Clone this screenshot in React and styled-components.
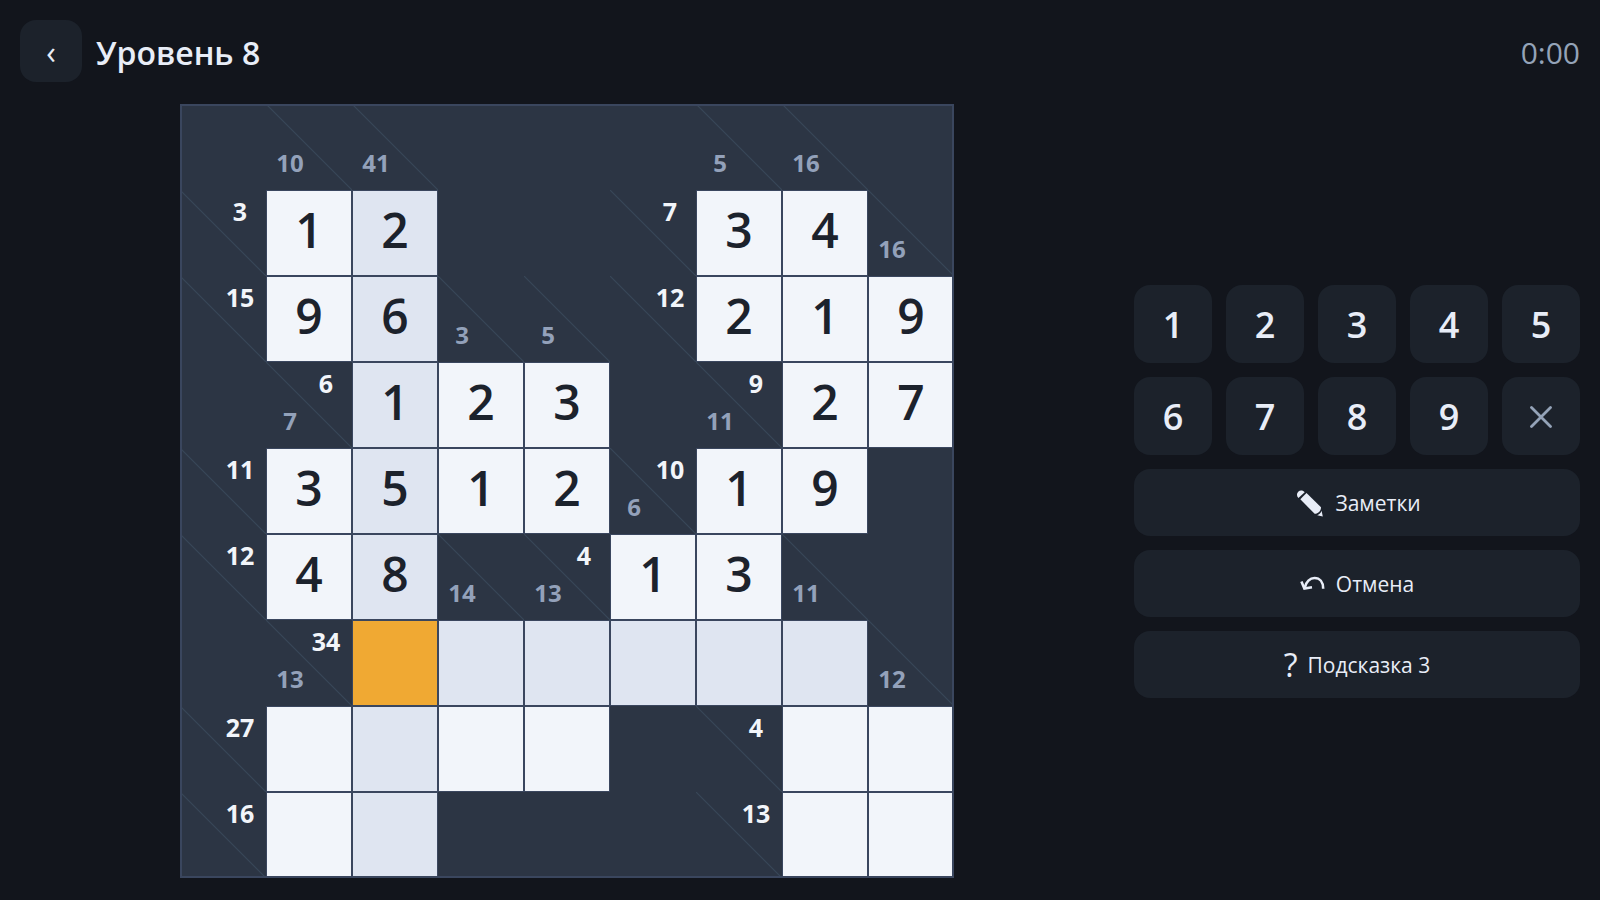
import React from "react";
import styled, { createGlobalStyle, css } from "styled-components";

const color = {
  page: "#12151c",
  surface: "#1c222b",
  text: "#e8edf7",
  muted: "#94a3b8",
  board: "#2c3544",
  line: "#3a465e",
  slash: "#374657",
  cell: "#f2f5fa",
  cellLit: "#dfe5f1",
  cellActive: "#f0a933",
  digit: "#1c222c",
};

const GlobalStyle = createGlobalStyle`
  *, *::before, *::after { box-sizing: border-box; }
  body {
    margin: 0;
    background: ${color.page};
    color: ${color.text};
    font-family: "Segoe UI", "Open Sans", "Noto Sans", sans-serif;
  }
  button { font-family: inherit; color: inherit; border: 0; padding: 0; cursor: pointer; }
`;

const Page = styled.div`
  --cell: round(down, min((100vh - 122px) / 9, (100vw - 506px) / 9), 1px);
  display: flex;
  flex-direction: column;
  gap: 20px;
  min-height: 100vh;
  padding: 20px;
`;

const Header = styled.header`
  display: flex;
  align-items: center;
  gap: 14px;
`;

const BackButton = styled.button`
  && {
    padding-top: 2px;
  }
  width: 62px;
  height: 62px;
  border-radius: 16px;
  background: ${color.surface};
  font-size: 32px;
  line-height: 60px;
`;

const Title = styled.h1`
  flex: 1;
  margin: 0;
  padding-top: 4px;
  font-size: 32px;
  font-weight: 600;
  line-height: 48px;
`;

const Timer = styled.time`
  padding-top: 4px;
  color: ${color.muted};
  font-size: 30px;
  line-height: 48px;
`;

const Main = styled.main`
  flex: 1;
  display: flex;
  align-items: center;
  gap: 20px;
`;

const BoardArea = styled.section`
  flex: 1;
  display: flex;
  justify-content: center;
`;

const Board = styled.div`
  position: relative;
  display: grid;
  grid-template-columns: repeat(9, var(--cell));
  grid-auto-rows: var(--cell);
  background: ${color.board};

  &::after {
    content: "";
    position: absolute;
    inset: 0;
    border: 2px solid ${color.line};
    pointer-events: none;
  }
`;

const cellTone = {
  plain: color.cell,
  lit: color.cellLit,
  active: color.cellActive,
};

const Cell = styled.button`
  && {
    padding-bottom: 6px;
    border: 1px solid ${color.line};
    color: ${color.digit};
  }
  background: ${(p) => cellTone[p.$tone]};
  font-size: 48px;
  font-weight: 600;
  line-height: 1;
`;

const Blank = styled.div``;

const ClueCell = styled.div`
  display: grid;
  grid-template: 1fr 1fr / 1fr 1fr;
  place-items: center;
  padding: 2px 8px 8px 6px;
  background: linear-gradient(
    to top right,
    transparent calc(50% - 1px),
    ${color.slash} 50%,
    transparent calc(50% + 1px)
  );
`;

const clueText = css`
  font-weight: 700;
  line-height: 36px;
`;

const Across = styled.span`
  ${clueText}
  grid-area: 1 / 2;
  color: ${color.cell};
  font-size: 25px;
`;

const Down = styled.span`
  ${clueText}
  grid-area: 2 / 1;
  color: #93a1ba;
  font-size: 24px;
`;

const Controls = styled.aside`
  display: flex;
  flex-direction: column;
  gap: 14px;
  width: 446px;
`;

const Keypad = styled.div`
  display: grid;
  grid-template-columns: repeat(5, 1fr);
  gap: 14px;
`;

const Key = styled.button`
  && {
    padding-top: 2px;
  }
  display: flex;
  align-items: center;
  justify-content: center;
  height: 78px;
  border-radius: 16px;
  background: ${color.surface};
  font-size: 36px;
  font-weight: 600;
  line-height: 1;
`;

const Action = styled.button`
  && {
    padding-top: 2px;
  }
  display: flex;
  align-items: center;
  justify-content: center;
  gap: 10px;
  height: 67px;
  border-radius: 16px;
  background: ${color.surface};
  font-size: 21px;
  line-height: 32px;
`;

const HintMark = styled.span`
  font-size: 32px;
  line-height: 32px;
`;

const ROWS = [
  ["", "/10", "/41", "", "", "", "/5", "/16", ""],
  ["3/", 1, 2, "", "", "7/", 3, 4, "/16"],
  ["15/", 9, 6, "/3", "/5", "12/", 2, 1, 9],
  ["", "6/7", 1, 2, 3, "", "9/11", 2, 7],
  ["11/", 3, 5, 1, 2, "10/6", 1, 9, ""],
  ["12/", 4, 8, "/14", "4/13", 1, 3, "/11", ""],
  ["", "34/13", 0, 0, 0, 0, 0, 0, "/12"],
  ["27/", 0, 0, 0, 0, "", "4/", 0, 0],
  ["16/", 0, 0, "", "", "", "13/", 0, 0],
];
const ACTIVE = { row: 6, col: 2 };

function toneOf(row, col) {
  if (row === ACTIVE.row && col === ACTIVE.col) return "active";
  return row === ACTIVE.row || col === ACTIVE.col ? "lit" : "plain";
}

function Square({ value, row, col }) {
  if (value === "") return <Blank />;
  if (typeof value === "number") {
    return (
      <Cell $tone={toneOf(row, col)} aria-label={`${row}:${col} ${value || ""}`}>
        {value || null}
      </Cell>
    );
  }
  const [across, down] = value.split("/");
  return (
    <ClueCell>
      {across && <Across>{across}</Across>}
      {down && <Down>{down}</Down>}
    </ClueCell>
  );
}

const PencilIcon = () => (
  <svg width="32" height="30" viewBox="0 0 32 30" fill="currentColor" aria-hidden="true">
    <path d="M5.400 9.900C3.500 8 3.500 5.300 5.200 3.700c1.800-1.700 4.900-1.500 6.500.5z" />
    <path d="M7.300 11.300l6.200-6.300L28 19.200c.2 3.600-3 6.800-6.400 6.600z" />
    <path d="M24.200 27.200c2-.6 3.700-2.300 4.400-4.400l1.200 5.700z" />
  </svg>
);

const UndoIcon = () => (
  <svg width="26" height="28" viewBox="0 0 26 28" fill="none" stroke="currentColor" strokeWidth="2.600" aria-hidden="true">
    <path d="M4.800 17.500C6 11.700 10 8 14.500 8c5.300 0 8.700 4.200 8.700 10.700" />
    <path d="M1.400 11.500L4.400 18.500 12 17.300" />
  </svg>
);

const EraseIcon = () => (
  <svg width="22" height="22" viewBox="0 0 22 22" stroke={color.muted} strokeWidth="2.800" strokeLinecap="round" aria-hidden="true">
    <path d="M1.500 1.500l19 19M20.500 1.500l-19 19" />
  </svg>
);

export default function App() {
  return (
    <>
      <GlobalStyle />
      <Page>
        <Header>
          <BackButton aria-label="Назад">‹</BackButton>
          <Title>Уровень 8</Title>
          <Timer>0:00</Timer>
        </Header>
        <Main>
          <BoardArea>
            <Board>
              {ROWS.map((cells, row) =>
                cells.map((value, col) => (
                  <Square key={`${row}-${col}`} value={value} row={row} col={col} />
                ))
              )}
            </Board>
          </BoardArea>
          <Controls>
            <Keypad>
              {[1, 2, 3, 4, 5, 6, 7, 8, 9].map((n) => (
                <Key key={n}>{n}</Key>
              ))}
              <Key aria-label="Стереть">
                <EraseIcon />
              </Key>
            </Keypad>
            <Action>
              <PencilIcon />
              <span>Заметки</span>
            </Action>
            <Action>
              <UndoIcon />
              <span>Отмена</span>
            </Action>
            <Action>
              <HintMark>?</HintMark>
              <span>Подсказка 3</span>
            </Action>
          </Controls>
        </Main>
      </Page>
    </>
  );
}
